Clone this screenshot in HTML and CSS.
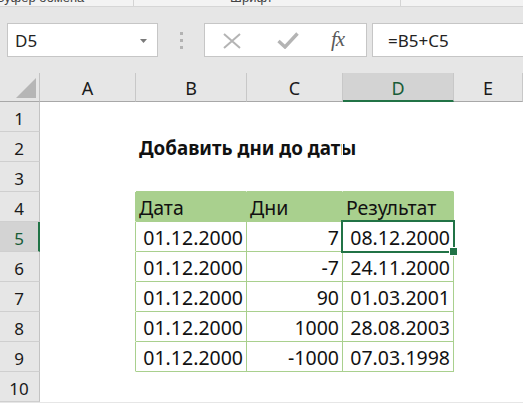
FILE: index.html
```html
<!DOCTYPE html>
<html lang="ru">
<head>
<meta charset="utf-8">
<title>Добавить дни до даты</title>
<link rel="stylesheet" href="styles.css">
</head>
<body>
<div class="app">
  <div class="ribbon">
    <div class="grp g1"><span>Буфер обмена</span></div>
    <div class="grp g2"><span>Шрифт</span></div>
    <div class="grp g3"></div>
  </div>
  <div class="fbar">
    <div class="namebox">
      <span>D5</span>
      <svg class="dd" width="7" height="4" viewBox="0 0 7 4"><polygon points="0,0 7,0 3.5,4" fill="#7a7a7a"/></svg>
    </div>
    <div class="grip"><i></i><i></i><i></i></div>
    <div class="btns">
      <svg class="ico" width="18" height="16" viewBox="0 0 18 16"><path d="M1 1 L17 15 M17 1 L1 15" stroke="#b4b4b4" stroke-width="2" fill="none"/></svg>
      <svg class="ico" width="22" height="17" viewBox="0 0 22 17"><path d="M1.5 9 L8 15 L20.5 1.5" stroke="#b4b4b4" stroke-width="3.4" fill="none"/></svg>
      <span class="fx">fx</span>
    </div>
    <div class="formula">=B5+C5</div>
  </div>
  <div class="sheet">
    <div class="corner"><svg width="20" height="20" viewBox="0 0 20 20"><polygon points="20,0 20,20 0,20" fill="#b6b6b6"/></svg></div>
    <div class="ch">A</div><div class="ch">B</div><div class="ch">C</div><div class="ch sel">D</div><div class="ch">E</div>

    <div class="rh">1</div><div class="c"></div><div class="c"></div><div class="c"></div><div class="c"></div><div class="c"></div>
    <div class="rh">2</div><div class="c"></div><div class="c title">Добавить дни до даты</div><div class="c"></div><div class="c"></div><div class="c"></div>
    <div class="rh">3</div><div class="c"></div><div class="c tt"></div><div class="c tt"></div><div class="c tt"></div><div class="c"></div>

    <div class="rh">4</div><div class="c tl"></div><div class="c t th">Дата</div><div class="c t th">Дни</div><div class="c t th">Результат</div><div class="c"></div>
    <div class="rh sel">5</div><div class="c tl"></div><div class="c t num">01.12.2000</div><div class="c t num">7</div><div class="c t num active">08.12.2000<span class="selbox"></span><span class="handle"></span></div><div class="c"></div>
    <div class="rh">6</div><div class="c tl"></div><div class="c t num">01.12.2000</div><div class="c t num">-7</div><div class="c t num">24.11.2000</div><div class="c"></div>
    <div class="rh">7</div><div class="c tl"></div><div class="c t num">01.12.2000</div><div class="c t num">90</div><div class="c t num">01.03.2001</div><div class="c"></div>
    <div class="rh">8</div><div class="c tl"></div><div class="c t num">01.12.2000</div><div class="c t num">1000</div><div class="c t num">28.08.2003</div><div class="c"></div>
    <div class="rh">9</div><div class="c tl"></div><div class="c t num">01.12.2000</div><div class="c t num">-1000</div><div class="c t num">07.03.1998</div><div class="c"></div>
    <div class="rh">10</div><div class="c"></div><div class="c"></div><div class="c"></div><div class="c"></div><div class="c"></div>
  </div>
</div>
</body>
</html>
```

FILE: styles.css
```css
* { box-sizing: border-box; }
html, body { margin: 0; padding: 0; }
body {
  width: 523px;
  height: 403px;
  overflow: hidden;
  background: #e6e6e6;
  font-family: "Noto Sans", "Open Sans", sans-serif;
  color: #000;
}
.app { width: 523px; height: 403px; overflow: hidden; }

/* ribbon group labels strip */
.ribbon {
  display: flex;
  height: 7px;
  background: #f3f3f3;
  border-bottom: 1px solid #d6d6d6;
  overflow: hidden;
}
.grp { height: 6px; overflow: hidden; border-right: 1px solid #d4d4d4; }
.grp span {
  display: block;
  font-family: "Liberation Sans", sans-serif;
  font-size: 13px;
  line-height: 13px;
  margin-top: -9px;
  color: #444;
  white-space: nowrap;
}
.g1 { width: 134px; }
.g1 span { margin-left: -4px; }
.g2 { width: 267px; }
.g2 span { padding-left: 96px; }
.g3 { flex: 1; border-right: none; }

/* formula bar */
.fbar {
  display: flex;
  height: 66px;
  padding-top: 16px;
  align-items: flex-start;
}
.namebox {
  margin-left: 7px;
  width: 151px;
  height: 34px;
  background: #fff;
  border: 1px solid #c6c6c6;
  display: flex;
  align-items: center;
  justify-content: space-between;
  padding: 0 10px 0 7px;
  font-size: 17px;
  color: #222;
}
.namebox .dd { margin-top: 1px; }
.grip {
  width: 46px;
  height: 34px;
  display: flex;
  flex-direction: column;
  align-items: center;
  justify-content: center;
  gap: 4px;
}
.grip i { display: block; width: 3px; height: 3px; background: #b3b3b3; }
.btns {
  width: 163px;
  height: 34px;
  background: #fff;
  border: 1px solid #c6c6c6;
  display: flex;
  align-items: center;
  padding-left: 18px;
}
.btns .ico:nth-child(1) { margin-right: 36px; margin-top: 1px; }
.btns .ico:nth-child(2) { margin-right: 32px; margin-top: 1px; }
.fx {
  font-family: "Liberation Serif", "DejaVu Serif", serif;
  font-style: italic;
  font-size: 21px;
  color: #5a5a5a;
  letter-spacing: -1px;
  line-height: 1;
  margin-top: -2px;
}
.formula {
  flex: 1;
  margin-left: 5px;
  margin-right: -2px;
  height: 34px;
  background: #fff;
  border: 1px solid #c6c6c6;
  display: flex;
  align-items: center;
  padding-left: 15px;
  font-size: 17px;
  color: #222;
}

/* sheet grid */
.sheet {
  display: grid;
  grid-template-columns: 40px 96px 111px 96px 111px 1fr;
  grid-template-rows: 29px repeat(10, 30px);
  background: #fff;
}
.corner {
  background: #e6e6e6;
  border-right: 1px solid #c3c3c3;
  border-bottom: 1px solid #a8a8a8;
  display: flex;
  align-items: flex-end;
  padding: 0 0 3px 16px;
}
.corner svg { display: block; }
.ch {
  background: #e6e6e6;
  border-right: 1px solid #c8c8c8;
  border-bottom: 1px solid #a8a8a8;
  display: flex;
  align-items: flex-end;
  justify-content: center;
  font-size: 18px;
  line-height: 25px;
  color: #1a1a1a;
}
.ch.sel {
  background: #d3d3d3;
  border-bottom: 2px solid #217346;
  color: #185c37;
  line-height: 24px;
}
.rh {
  background: #e6e6e6;
  border-right: 1px solid #c3c3c3;
  border-bottom: 1px solid #cfcfcf;
  display: flex;
  align-items: flex-end;
  justify-content: center;
  font-size: 17px;
  line-height: 24px;
  color: #1a1a1a;
  padding-right: 1px;
}
.rh.sel {
  background: #d3d3d3;
  border-right: 2px solid #217346;
  color: #185c37;
  padding-right: 0;
}
.c {
  border-right: 1px solid #fff;
  border-bottom: 1px solid #fff;
  display: flex;
  align-items: flex-end;
  font-size: 19.5px;
  line-height: 26px;
  white-space: nowrap;
  padding: 0 3px 0 3px;
  color: #111;
}
.c.title {
  font-weight: 700;
  font-size: 18.8px;
  padding-left: 3px;
}
.c.th { padding-left: 3px; }
.c.tt { border-bottom-color: #a9d08e; }
.c.tl { border-right-color: #a9d08e; }
.c.t { border-right-color: #a9d08e; border-bottom-color: #a9d08e; }
.c.th { background: #a9d08e; }
.c.num { justify-content: flex-end; }
.c.active { position: relative; z-index: 2; }
.selbox {
  position: absolute;
  top: -2px;
  left: -2px;
  width: 114px;
  height: 33px;
  border: 2px solid #217346;
  pointer-events: none;
}
.handle {
  position: absolute;
  left: 107px;
  top: 26px;
  width: 7px;
  height: 7px;
  background: #217346;
  box-shadow: 0 0 0 1px #fff;
  z-index: 3;
}
```
